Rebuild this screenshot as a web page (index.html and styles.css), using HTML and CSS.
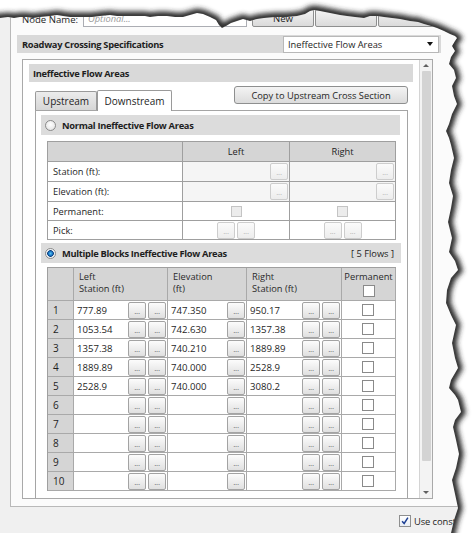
FILE: index.html
```html
<!DOCTYPE html>
<html>
<head>
<meta charset="utf-8">
<title>Ineffective Flow Areas</title>
<link rel="stylesheet" href="styles.css">
</head>
<body>
<div class="page">
  <div class="outer">
    <div class="node-row">
      <span class="node-label">Node Name:</span>
      <div class="node-field">Optional...</div>
      <div class="top-btn first">New</div>
      <div class="top-btn"></div>
      <div class="top-btn"></div>
    </div>
    <div class="spec-bar">
      <span class="bold">Roadway Crossing Specifications</span>
      <div class="combo"><span>Ineffective Flow Areas</span><span class="combo-arrow"></span></div>
    </div>
    <div class="scroller">
      <div class="scroll-content">
        <div class="section-bar"><span class="bold">Ineffective Flow Areas</span></div>
        <div class="tab-row">
          <div class="tab">Upstream</div>
          <div class="tab active">Downstream</div>
          <div class="copy-btn">Copy to Upstream Cross Section</div>
        </div>
        <div class="tab-panel">
          <div class="group-bar"><span class="radio"></span><span class="bold">Normal Ineffective Flow Areas</span></div>
          <div class="ntable">
            <div class="nc hd"></div>
            <div class="nc hd center">Left</div>
            <div class="nc hd center">Right</div>

            <div class="nc lbl">Station (ft):</div>
            <div class="nc dis"><span class="fill"></span><span class="dots off">...</span></div>
            <div class="nc dis"><span class="fill"></span><span class="dots off">...</span></div>

            <div class="nc lbl">Elevation (ft):</div>
            <div class="nc dis"><span class="fill"></span><span class="dots off">...</span></div>
            <div class="nc dis"><span class="fill"></span><span class="dots off">...</span></div>

            <div class="nc lbl">Permanent:</div>
            <div class="nc center"><span class="box off"></span></div>
            <div class="nc center"><span class="box off"></span></div>

            <div class="nc lbl">Pick:</div>
            <div class="nc center"><span class="dots off">...</span><span class="dots off">...</span></div>
            <div class="nc center"><span class="dots off">...</span><span class="dots off">...</span></div>
          </div>

          <div class="group-bar multi"><span class="radio on"></span><span class="bold">Multiple Blocks Ineffective Flow Areas</span><span class="flows">[ 5 Flows ]</span></div>
          <div class="mtable">
            <div class="mc hd num"></div>
            <div class="mc hd">Left<br>Station (ft)</div>
            <div class="mc hd">Elevation<br>(ft)</div>
            <div class="mc hd">Right<br>Station (ft)</div>
            <div class="mc hd perm-hd">Permanent<span class="box"></span></div>

            <div class="mc num">1</div>
            <div class="mc"><span class="val">777.89</span><span class="dots">...</span><span class="dots">...</span></div>
            <div class="mc"><span class="val">747.350</span><span class="dots">...</span></div>
            <div class="mc"><span class="val">950.17</span><span class="dots">...</span><span class="dots">...</span></div>
            <div class="mc center"><span class="box"></span></div>

            <div class="mc num">2</div>
            <div class="mc"><span class="val">1053.54</span><span class="dots">...</span><span class="dots">...</span></div>
            <div class="mc"><span class="val">742.630</span><span class="dots">...</span></div>
            <div class="mc"><span class="val">1357.38</span><span class="dots">...</span><span class="dots">...</span></div>
            <div class="mc center"><span class="box"></span></div>

            <div class="mc num">3</div>
            <div class="mc"><span class="val">1357.38</span><span class="dots">...</span><span class="dots">...</span></div>
            <div class="mc"><span class="val">740.210</span><span class="dots">...</span></div>
            <div class="mc"><span class="val">1889.89</span><span class="dots">...</span><span class="dots">...</span></div>
            <div class="mc center"><span class="box"></span></div>

            <div class="mc num">4</div>
            <div class="mc"><span class="val">1889.89</span><span class="dots">...</span><span class="dots">...</span></div>
            <div class="mc"><span class="val">740.000</span><span class="dots">...</span></div>
            <div class="mc"><span class="val">2528.9</span><span class="dots">...</span><span class="dots">...</span></div>
            <div class="mc center"><span class="box"></span></div>

            <div class="mc num">5</div>
            <div class="mc"><span class="val">2528.9</span><span class="dots">...</span><span class="dots">...</span></div>
            <div class="mc"><span class="val">740.000</span><span class="dots">...</span></div>
            <div class="mc"><span class="val">3080.2</span><span class="dots">...</span><span class="dots">...</span></div>
            <div class="mc center"><span class="box"></span></div>

            <div class="mc num">6</div>
            <div class="mc"><span class="val"></span><span class="dots">...</span><span class="dots">...</span></div>
            <div class="mc"><span class="val"></span><span class="dots">...</span></div>
            <div class="mc"><span class="val"></span><span class="dots">...</span><span class="dots">...</span></div>
            <div class="mc center"><span class="box"></span></div>

            <div class="mc num">7</div>
            <div class="mc"><span class="val"></span><span class="dots">...</span><span class="dots">...</span></div>
            <div class="mc"><span class="val"></span><span class="dots">...</span></div>
            <div class="mc"><span class="val"></span><span class="dots">...</span><span class="dots">...</span></div>
            <div class="mc center"><span class="box"></span></div>

            <div class="mc num">8</div>
            <div class="mc"><span class="val"></span><span class="dots">...</span><span class="dots">...</span></div>
            <div class="mc"><span class="val"></span><span class="dots">...</span></div>
            <div class="mc"><span class="val"></span><span class="dots">...</span><span class="dots">...</span></div>
            <div class="mc center"><span class="box"></span></div>

            <div class="mc num">9</div>
            <div class="mc"><span class="val"></span><span class="dots">...</span><span class="dots">...</span></div>
            <div class="mc"><span class="val"></span><span class="dots">...</span></div>
            <div class="mc"><span class="val"></span><span class="dots">...</span><span class="dots">...</span></div>
            <div class="mc center"><span class="box"></span></div>

            <div class="mc num">10</div>
            <div class="mc"><span class="val"></span><span class="dots">...</span><span class="dots">...</span></div>
            <div class="mc"><span class="val"></span><span class="dots">...</span></div>
            <div class="mc"><span class="val"></span><span class="dots">...</span><span class="dots">...</span></div>
            <div class="mc center"><span class="box"></span></div>
          </div>
        </div>
      </div>
      <div class="scrollbar">
        <div class="sb-end"><span class="arrow-up"></span></div>
        <div class="sb-thumb"></div>
        <div class="sb-space"></div>
        <div class="sb-end"><span class="arrow-down"></span></div>
      </div>
    </div>
  </div>
  <div class="bottom-row">
    <span class="box checked"><svg viewBox="0 0 12 12" width="10" height="10"><path d="M2.5 6.2 L5 9 L9.5 2" fill="none" stroke="#1c3f94" stroke-width="1.8"/></svg></span>
    <span class="bottom-text">Use constant</span>
  </div>
</div>
<svg class="torn" width="474" height="533" viewBox="0 0 474 533">
  <defs>
    <clipPath id="outside">
      <path d="M0,0 L474,0 L474,533 L451,533 L454,520 L458,508 L455,494 L452,480 L456,468 L459,454 L456,440 L453,427 L455,420 L461,412 L458,400 L455,395 L449,388 L451,380 L458,368 L455,358 L452,343 L456,325 L451,315 L446,303 L447,290 L451,278 L458,270 L455,261 L449,252 L452,238 L448,222 L451,208 L453,196 L449,183 L451,170 L454,158 L451,145 L449,138 L446,131 L449,124 L452,114 L457,104 L454,96 L452,86 L456,78 L454,70 L449,64 L451,57 L455,51 L452,46 L455,41 L457,38 L455,36 L450,34 L444,31 L437,28 L431,26 L424,24 L418,22 L410,21 L400,19 L392,18 L384,17 L377,16 L370,16 L364,18 L355,17 L347,16 L340,15 L330,13 L320,11 L314,10 L310,11 L305,14 L297,16 L287,17 L275,17 L264,18 L257,19 L250,21 L243,19 L237,21 L231,23 L226,26 L222,28 L219,25 L216,20 L210,17 L203,14 L197,13 L190,15 L183,17 L175,17 L167,16 L158,16 L150,17 L145,16 L135,16 L125,16 L117,16 L110,15 L100,16 L92,17 L83,17 L76,17 L70,17 L63,16 L57,15 L50,16 L40,17 L33,18 L27,17 L20,17 L14,18 L8,17 L0,18 Z"/>
    </clipPath>
    <filter id="blur" x="-10%" y="-10%" width="120%" height="120%">
      <feGaussianBlur stdDeviation="2.8"/>
    </filter>
  </defs>
  <g clip-path="url(#outside)">
    <rect x="0" y="0" width="474" height="533" fill="#ffffff"/>
    <polyline filter="url(#blur)" fill="none" stroke="#2a2a2a" stroke-width="9" points="-6,18 0,18 8,17 14,18 20,17 27,17 33,18 40,17 50,16 57,15 63,16 70,17 76,17 83,17 92,17 100,16 110,15 117,16 125,16 135,16 145,16 150,17 158,16 167,16 175,17 183,17 190,15 197,13 203,14 210,17 216,20 219,25 222,28 226,26 231,23 237,21 243,19 250,21 257,19 264,18 275,17 287,17 297,16 305,14 310,11 314,10 320,11 330,13 340,15 347,16 355,17 364,18 370,16 377,16 384,17 392,18 400,19 410,21 418,22 424,24 431,26 437,28 444,31 450,34 455,36 457,38 455,41 452,46 455,51 451,57 449,64 454,70 456,78 452,86 454,96 457,104 452,114 449,124 446,131 449,138 451,145 454,158 451,170 449,183 453,196 451,208 448,222 452,238 449,252 455,261 458,270 451,278 447,290 446,303 451,315 456,325 452,343 455,358 458,368 451,380 449,388 455,395 458,400 461,412 455,420 453,427 456,440 459,454 456,468 452,480 455,494 458,508 454,520 451,533 450,540"/>
  </g>
</svg>
</body>
</html>
```

FILE: styles.css
```css
* { box-sizing: border-box; }
html, body { margin: 0; padding: 0; }
body {
  position: relative;
  width: 474px;
  height: 533px;
  overflow: hidden;
  background: #f0f0f0;
  font-family: "Open Sans", "Noto Sans", "DejaVu Sans", sans-serif;
  font-size: 9.3px;
  color: #1e1e1e;
}
.page { width: 474px; height: 533px; }
.bold { font-weight: bold; letter-spacing: -0.3px; }

.outer {
  margin-left: 10px;
  width: 470px;
  height: 507px;
  border: 1px solid #b9b9b9;
  background: #fbfbfb;
}

/* top row */
.node-row { display: flex; align-items: center; height: 19px; margin-top: 7px; }
.node-label { margin-left: 11px; width: 61px; font-size: 9.6px; padding-top: 4px; }
.node-field {
  width: 164px; height: 18px;
  border: 1px solid #abadb3; background: #fff;
  color: #9a9a9a; font-style: italic;
  padding: 2px 0 0 4px; display: flex; align-items: center;
}
.top-btn {
  margin-left: 1px; width: 62px; height: 18px;
  border: 1px solid #8e8f8f; border-radius: 2px;
  background: linear-gradient(#f4f4f4, #dadada);
  display: flex; align-items: center; justify-content: center;
  font-size: 9.6px; padding-top: 1px;
}
.top-btn.first { margin-left: 5px; }

/* specifications bar */
.spec-bar {
  margin: 8px 0 0 6px; width: 424px; height: 18px;
  background: #d9d9d9; display: flex; align-items: center;
  padding: 0 2px 0 5px;
}
.combo {
  margin-left: auto; width: 156px; height: 17px;
  background: #fff; border: 1px solid #b8b8b8;
  display: flex; align-items: center; padding: 0 5px 0 4px;
}
.combo-arrow {
  margin-left: auto; width: 0; height: 0;
  border-left: 3.5px solid transparent; border-right: 3.5px solid transparent;
  border-top: 4px solid #111;
}

/* scroll viewer */
.scroller {
  margin: 6px 0 0 11px; width: 411px; height: 440px;
  border: 1px solid #a9a9a9; background: #fff; display: flex;
}
.scroll-content { width: 396px; height: 438px; overflow: hidden; }
.scrollbar {
  width: 13px; height: 438px; background: #f3f3f3;
  border-left: 1px solid #d4d4d4;
  display: flex; flex-direction: column; align-items: center;
}
.sb-end { height: 11px; width: 100%; display: flex; align-items: center; justify-content: center; }
.arrow-up { width: 0; height: 0; border-left: 3px solid transparent; border-right: 3px solid transparent; border-bottom: 3px solid #606060; }
.arrow-down { width: 0; height: 0; border-left: 3px solid transparent; border-right: 3px solid transparent; border-top: 3px solid #606060; }
.sb-thumb { width: 9px; height: 390px; background: #d3d3d3; border-radius: 1px; }
.sb-space { flex: 1; }

.section-bar {
  margin: 4px 0 0 6px; width: 384px; height: 18px;
  background: #d9d9d9;
  padding-left: 4px; display: flex; align-items: center;
}

/* tabs */
.tab-row { display: flex; align-items: flex-end; height: 28px; padding-left: 12px; }
.tab {
  width: 62px; height: 19px;
  border: 1px solid #9a9a9a; border-bottom: none; border-radius: 2px 2px 0 0;
  background: linear-gradient(#ececec, #d6d6d6);
  display: flex; align-items: center; justify-content: center;
  font-size: 10px;
}
.tab.active {
  width: 75px; height: 21px; background: #fff;
  margin-bottom: -1px; position: relative; z-index: 1;
}
.copy-btn {
  margin-left: auto; margin-right: 11px; align-self: flex-start; margin-top: 4px;
  width: 174px; height: 18px;
  border: 1px solid #8e8f8f; border-radius: 3px;
  background: linear-gradient(#f4f4f4, #dcdcdc);
  display: flex; align-items: center; justify-content: center;
}

.tab-panel {
  margin-left: 12px; width: 373px; height: 400px;
  border: 1px solid #a5a5a5; background: #fff;
  padding: 4px 0 0 5px;
}

.group-bar {
  width: 359px; height: 20px; background: #dcdcdc;
  display: flex; align-items: center; padding: 0 7px 0 4px;
}
.group-bar.multi { width: 360px; margin-top: 3px; }
.flows { margin-left: auto; }

.radio {
  width: 11px; height: 11px; border-radius: 50%;
  border: 1px solid #8a8a8a; margin-right: 6px;
  background: radial-gradient(circle at 50% 40%, #ffffff, #dedede);
}
.radio.on {
  background: radial-gradient(circle, #58c2ee 0, #1a78c8 2px, #0e3f7a 3px, #e6ecf2 3.6px, #ffffff 5px);
}

/* normal table */
.ntable {
  margin: 6px 0 0 6px; width: 349px;
  display: grid;
  grid-template-columns: 135px 107px 106px;
  grid-template-rows: 20px 20px 20px 19px 19px;
  border-left: 1px solid #9f9f9f; border-top: 1px solid #9f9f9f;
}
.nc {
  border-right: 1px solid #9f9f9f; border-bottom: 1px solid #9f9f9f;
  display: flex; align-items: center;
}
.nc.hd { background: #d5d5d5; }
.nc.lbl { padding-left: 5px; }
.nc.dis { background: #f5f5f5; padding-right: 1px; }
.center { justify-content: center; }
.fill { flex: 1; }

/* multi table */
.mtable {
  margin: 4px 0 0 6px; width: 349px;
  display: grid;
  grid-template-columns: 26px 94px 79px 95px 54px;
  grid-template-rows: 33px repeat(10, 19px);
  border-left: 1px solid #9f9f9f; border-top: 1px solid #9f9f9f;
}
.mc {
  border-right: 1px solid #a9a9a9; border-bottom: 1px solid #a9a9a9;
  display: flex; align-items: center; padding-right: 1px;
}
.mc.hd {
  background: #d5d5d5; align-items: flex-start;
  padding: 3px 0 0 5px; line-height: 12px; color: #2a2a2a;
}
.mc.num { background: #d5d5d5; padding-left: 5px; font-size: 10px; }
.mc.hd.num { padding: 0; }
.perm-hd { flex-direction: column; align-items: center !important; padding: 3px 0 0 0 !important; }
.perm-hd .box { margin-top: 2px; }
.val { flex: 1; padding-left: 3px; font-size: 9.6px; }

.dots {
  width: 18px; height: 17px; flex: none;
  border: 1px solid #a3a3a3; border-radius: 2px;
  background: linear-gradient(#fcfcfc, #e0e0e0);
  font-size: 8px; line-height: 8px; color: #666;
  display: flex; align-items: flex-end; justify-content: center;
  padding-bottom: 3px; letter-spacing: -0.3px;
}
.dots + .dots { margin-left: 2px; }
.dots.off {
  border-color: #cdcdcd; color: #b4b4b4;
  background: linear-gradient(#fbfbfb, #ededed);
}

.box {
  width: 12px; height: 12px; flex: none;
  border: 1px solid #8a8a8a; background: #fff;
  display: inline-flex; align-items: center; justify-content: center;
}
.box.off { width: 11px; height: 11px; border-color: #c4c4c4; background: #ececec; }

/* bottom row */
.bottom-row {
  display: flex; align-items: center; height: 12px;
  margin-top: 8px; padding-left: 399px; white-space: nowrap;
}
.box.checked { border-color: #8e8f8f; background: linear-gradient(#ffffff, #e8edf4); }
.bottom-text { margin-left: 3px; font-size: 9.4px; letter-spacing: -0.1px; }

.torn { position: absolute; left: 0; top: 0; pointer-events: none; }
```
